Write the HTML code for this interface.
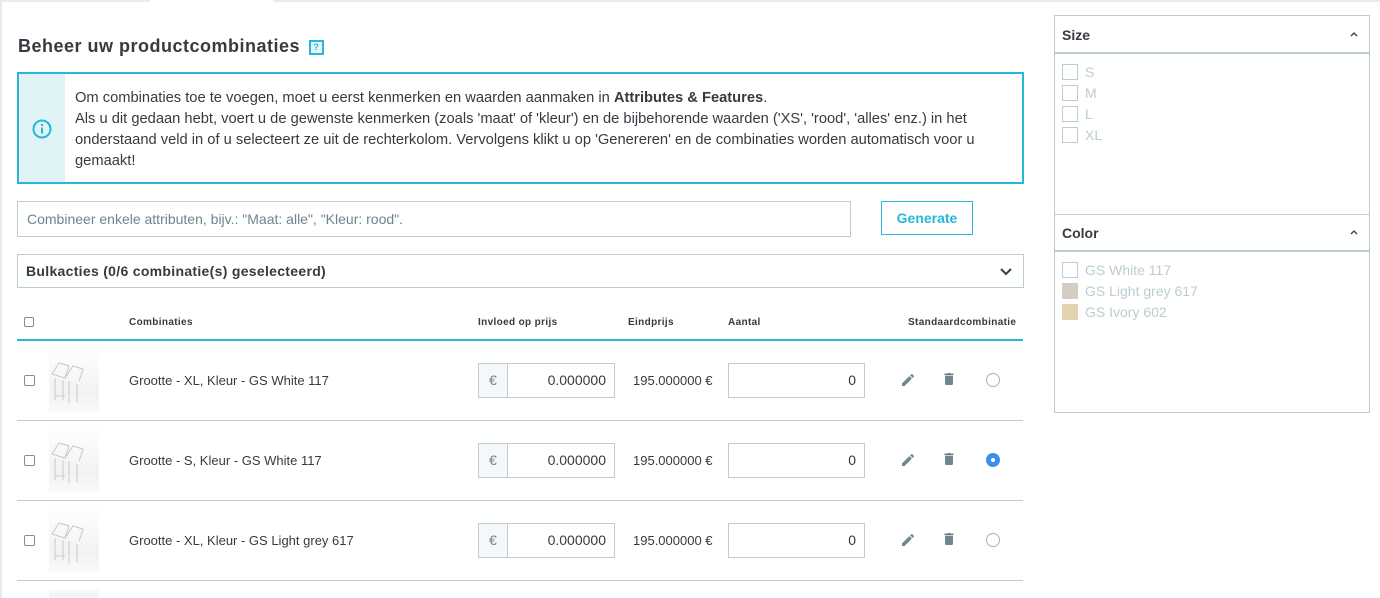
<!DOCTYPE html>
<html><head><meta charset="utf-8"><style>
*{box-sizing:border-box;margin:0;padding:0}
body{width:1380px;height:598px;overflow:hidden;background:#fff;font-family:"Liberation Sans","DejaVu Sans",sans-serif;color:#363a41;position:relative;font-size:13px}
.abs{position:absolute}
.topl{left:0;top:0;height:2px;background:#eaeaea}
h2{position:absolute;left:18px;top:36px;font-size:18px;letter-spacing:0.5px;font-weight:bold;color:#363a41}
.q{display:inline-block;width:15px;height:15px;border:2px solid #25b9d7;background:#e7f6fa;color:#25b9d7;font-size:9px;text-align:center;line-height:11px;vertical-align:2px;margin-left:3px;letter-spacing:0}
.info{left:17px;top:72px;width:1007px;height:112px;border:2px solid #25b9d7}
.info .ic{position:absolute;left:0;top:0;width:46px;height:108px;background:#e0f4f8}
.info p{position:absolute;left:56px;top:14px;width:925px;font-size:14.7px;line-height:21px;color:#363a41}
.inp{border:1px solid #bbcdd2;background:#fff}
.btn{left:881px;top:201px;width:92px;height:34px;border:1px solid #25b9d7;color:#25b9d7;font-weight:bold;font-size:14px;text-align:center;line-height:32px}
.th{top:317px;font-size:10px;font-weight:bold;color:#363a41;letter-spacing:0.35px}
.cb{width:11px;height:11px;border:1px solid #8a8a8a;border-radius:2px;background:#fff}
.row{left:17px;width:1006px;height:1px;background:#bbcdd2}
.txt{font-size:13px}
.img{width:50px;height:64px;background:linear-gradient(#fff,#f2f2f2 70%,#fafafa)}
.panel{border:1px solid #bbcdd2}
.ph{font-size:14px;font-weight:bold;color:#363a41}
.opt{font-size:14px;color:#bbcdd2}
.opt div{height:21px;display:flex;align-items:center}
.sq{width:16px;height:16px;border:1px solid #bbcdd2;display:inline-block;margin-right:7px}
</style></head><body>
<div class="abs topl" style="width:150px"></div>
<div class="abs topl" style="left:273px;width:1107px"></div>
<div class="abs" style="left:0;top:0;width:2px;height:598px;background:#eaeaea"></div>

<h2>Beheer uw productcombinaties <span class="q">?</span></h2>

<div class="abs info"><div class="ic">
<svg class="abs" style="left:13px;top:45px" width="20" height="20" viewBox="0 0 20 20"><circle cx="10" cy="10" r="8.5" fill="none" stroke="#25b9d7" stroke-width="2"/><rect x="9" y="8.5" width="2" height="6" fill="#25b9d7"/><rect x="9" y="5" width="2" height="2" fill="#25b9d7"/></svg></div>
<p>Om combinaties toe te voegen, moet u eerst kenmerken en waarden aanmaken in <b>Attributes &amp; Features</b>.<br>Als u dit gedaan hebt, voert u de gewenste kenmerken (zoals 'maat' of 'kleur') en de bijbehorende waarden ('XS', 'rood', 'alles' enz.) in het onderstaand veld in of u selecteert ze uit de rechterkolom. Vervolgens klikt u op 'Genereren' en de combinaties worden automatisch voor u gemaakt!</p></div>

<div class="abs inp" style="left:17px;top:201px;width:834px;height:36px;"><span class="abs" style="left:9px;top:9px;font-size:14px;color:#6c868e">Combineer enkele attributen, bijv.: "Maat: alle", "Kleur: rood".</span></div>
<div class="abs btn">Generate</div>

<div class="abs inp" style="left:17px;top:254px;width:1007px;height:34px"><span class="abs" style="left:8px;top:8px;font-size:14px;font-weight:bold;letter-spacing:0.3px">Bulkacties (0/6 combinatie(s) geselecteerd)</span>
<svg class="abs" style="left:981px;top:12px" width="14" height="10" viewBox="0 0 14 10"><path d="M2 2l5 5 5-5" fill="none" stroke="#363a41" stroke-width="2"/></svg></div>

<div class="abs cb" style="left:24px;top:317px;width:10px;height:10px"></div>
<div class="abs th" style="left:129px">Combinaties</div>
<div class="abs th" style="left:478px">Invloed op prijs</div>
<div class="abs th" style="left:628px">Eindprijs</div>
<div class="abs th" style="left:728px">Aantal</div>
<div class="abs th" style="left:908px">Standaardcombinatie</div>
<div class="abs" style="left:17px;top:339px;width:1006px;height:2px;background:#25b9d7"></div>

<div class="abs cb" style="left:24px;top:375px"></div>
<div class="abs img" style="left:49px;top:348px"><svg width="50" height="64"><g fill="none" stroke="#c8c8c8" stroke-width="1"><path d="M3 26l7-11 10 3-4 12zM16 30l8-12 10 3-4 12M6 30v22M14 32v20M20 33v22M28 36v18M6 48h10"/></g></svg></div>
<div class="abs txt" style="left:129px;top:373px">Grootte - XL, Kleur - GS White 117</div>

<div class="abs cb" style="left:24px;top:455px"></div>
<div class="abs img" style="left:49px;top:428px"><svg width="50" height="64"><g fill="none" stroke="#c8c8c8" stroke-width="1"><path d="M3 26l7-11 10 3-4 12zM16 30l8-12 10 3-4 12M6 30v22M14 32v20M20 33v22M28 36v18M6 48h10"/></g></svg></div>
<div class="abs txt" style="left:129px;top:453px">Grootte - S, Kleur - GS White 117</div>

<div class="abs cb" style="left:24px;top:535px"></div>
<div class="abs img" style="left:49px;top:508px"><svg width="50" height="64"><g fill="none" stroke="#c8c8c8" stroke-width="1"><path d="M3 26l7-11 10 3-4 12zM16 30l8-12 10 3-4 12M6 30v22M14 32v20M20 33v22M28 36v18M6 48h10"/></g></svg></div>
<div class="abs txt" style="left:129px;top:533px">Grootte - XL, Kleur - GS Light grey 617</div>
<div class="abs img" style="left:49px;top:588px;height:10px"></div>

<div class="abs row" style="top:420px"></div>
<div class="abs row" style="top:500px"></div>
<div class="abs row" style="top:580px"></div>

<div class="abs inp" style="left:478px;top:363px;width:137px;height:35px"><div class="abs" style="left:0;top:0;width:29px;height:33px;background:#f4f8f9;border-right:1px solid #bbcdd2;color:#6c868e;text-align:center;line-height:33px;font-size:14px">€</div><span class="abs" style="right:8px;top:8px;font-size:14px">0.000000</span></div>
<div class="abs inp" style="left:478px;top:443px;width:137px;height:35px"><div class="abs" style="left:0;top:0;width:29px;height:33px;background:#f4f8f9;border-right:1px solid #bbcdd2;color:#6c868e;text-align:center;line-height:33px;font-size:14px">€</div><span class="abs" style="right:8px;top:8px;font-size:14px">0.000000</span></div>
<div class="abs inp" style="left:478px;top:523px;width:137px;height:35px"><div class="abs" style="left:0;top:0;width:29px;height:33px;background:#f4f8f9;border-right:1px solid #bbcdd2;color:#6c868e;text-align:center;line-height:33px;font-size:14px">€</div><span class="abs" style="right:8px;top:8px;font-size:14px">0.000000</span></div>

<div class="abs txt" style="left:633px;top:373px">195.000000 €</div>
<div class="abs txt" style="left:633px;top:453px">195.000000 €</div>
<div class="abs txt" style="left:633px;top:533px">195.000000 €</div>

<div class="abs inp" style="left:728px;top:363px;width:137px;height:35px"><span class="abs" style="right:8px;top:8px;font-size:14px">0</span></div>
<div class="abs inp" style="left:728px;top:443px;width:137px;height:35px"><span class="abs" style="right:8px;top:8px;font-size:14px">0</span></div>
<div class="abs inp" style="left:728px;top:523px;width:137px;height:35px"><span class="abs" style="right:8px;top:8px;font-size:14px">0</span></div>

<svg class="abs" style="left:900px;top:372px" width="16" height="16" viewBox="0 0 24 24"><path d="M3 17.25V21h3.75L17.8 9.94l-3.75-3.75zM20.7 7.04a1 1 0 000-1.41l-2.34-2.34a1 1 0 00-1.41 0l-1.83 1.83 3.75 3.75z" fill="#6c868e"/></svg>
<svg class="abs" style="left:941px;top:371px" width="16" height="16" viewBox="0 0 24 24"><path d="M6 19c0 1.1.9 2 2 2h8c1.1 0 2-.9 2-2V7H6zM19 4h-3.5l-1-1h-5l-1 1H5v2h14z" fill="#6c868e"/></svg>
<div class="abs" style="left:986px;top:373px;width:14px;height:14px;border:1px solid #b0b0b0;border-radius:50%"></div>

<svg class="abs" style="left:900px;top:452px" width="16" height="16" viewBox="0 0 24 24"><path d="M3 17.25V21h3.75L17.8 9.94l-3.75-3.75zM20.7 7.04a1 1 0 000-1.41l-2.34-2.34a1 1 0 00-1.41 0l-1.83 1.83 3.75 3.75z" fill="#6c868e"/></svg>
<svg class="abs" style="left:941px;top:451px" width="16" height="16" viewBox="0 0 24 24"><path d="M6 19c0 1.1.9 2 2 2h8c1.1 0 2-.9 2-2V7H6zM19 4h-3.5l-1-1h-5l-1 1H5v2h14z" fill="#6c868e"/></svg>
<div class="abs" style="left:986px;top:453px;width:14px;height:14px;border-radius:50%;background:#3b8ef0"><div class="abs" style="left:5px;top:5px;width:4px;height:4px;border-radius:50%;background:#fff"></div></div>

<svg class="abs" style="left:900px;top:532px" width="16" height="16" viewBox="0 0 24 24"><path d="M3 17.25V21h3.75L17.8 9.94l-3.75-3.75zM20.7 7.04a1 1 0 000-1.41l-2.34-2.34a1 1 0 00-1.41 0l-1.83 1.83 3.75 3.75z" fill="#6c868e"/></svg>
<svg class="abs" style="left:941px;top:531px" width="16" height="16" viewBox="0 0 24 24"><path d="M6 19c0 1.1.9 2 2 2h8c1.1 0 2-.9 2-2V7H6zM19 4h-3.5l-1-1h-5l-1 1H5v2h14z" fill="#6c868e"/></svg>
<div class="abs" style="left:986px;top:533px;width:14px;height:14px;border:1px solid #b0b0b0;border-radius:50%"></div>

<div class="abs panel" style="left:1054px;top:15px;width:316px;height:398px"></div>
<div class="abs" style="left:1055px;top:52px;width:314px;height:2px;background:#bbcdd2"></div>
<div class="abs ph" style="left:1062px;top:27px">Size</div>
<svg class="abs" style="left:1349px;top:30px" width="10" height="8"><path d="M2 6l3-3 3 3" fill="none" stroke="#363a41" stroke-width="1.3"/></svg>
<div class="abs opt" style="left:1062px;top:61px">
<div><span class="sq"></span>S</div>
<div><span class="sq"></span>M</div>
<div><span class="sq"></span>L</div>
<div><span class="sq"></span>XL</div></div>
<div class="abs" style="left:1055px;top:214px;width:314px;height:1px;background:#bbcdd2"></div>
<div class="abs" style="left:1055px;top:250px;width:314px;height:2px;background:#bbcdd2"></div>
<div class="abs ph" style="left:1062px;top:225px">Color</div>
<svg class="abs" style="left:1349px;top:228px" width="10" height="8"><path d="M2 6l3-3 3 3" fill="none" stroke="#363a41" stroke-width="1.3"/></svg>
<div class="abs opt" style="left:1062px;top:259px">
<div><span class="sq"></span>GS White 117</div>
<div><span class="sq" style="background:#d3cdc2;border-color:#d3cdc2"></span>GS Light grey 617</div>
<div><span class="sq" style="background:#e2d4b0;border-color:#e2d4b0"></span>GS Ivory 602</div></div>
</body></html>
